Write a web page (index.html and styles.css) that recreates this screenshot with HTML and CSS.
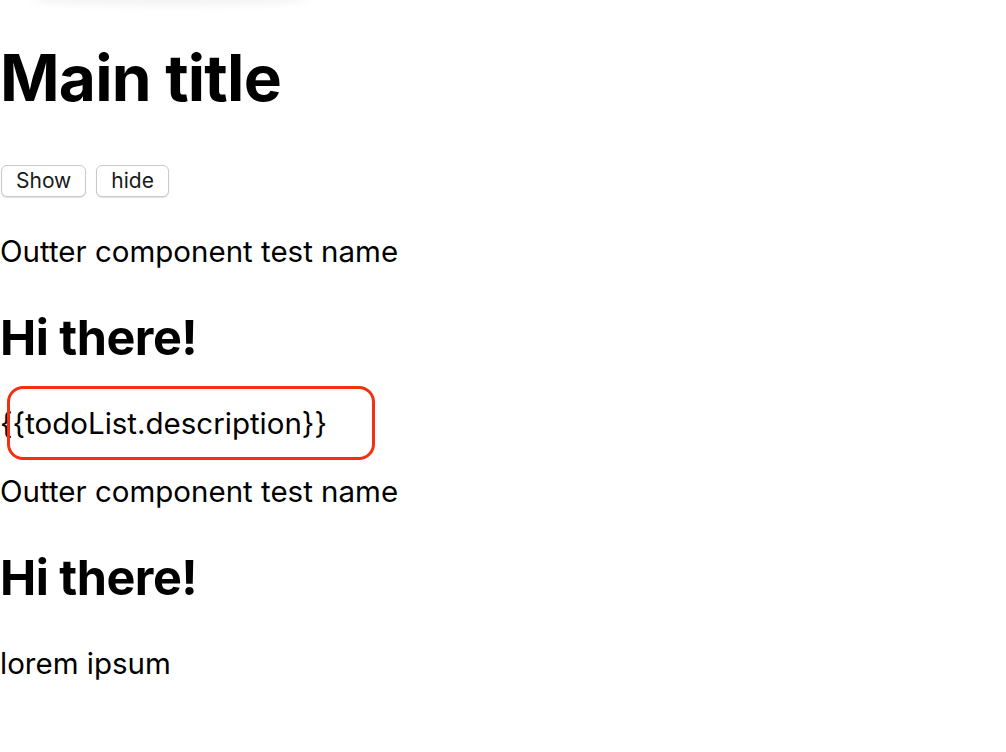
FILE: index.html
```html
<!DOCTYPE html>
<html lang="en">
<head>
<meta charset="utf-8">
<title>Main title</title>
<link rel="stylesheet" href="styles.css">
</head>
<body>
<div class="top-shade"></div>
<h1 class="main-title">Main title</h1>
<div class="controls">
  <button class="btn">Show</button>
  <button class="btn">hide</button>
</div>
<section class="outer">
  <p class="name">Outter component test name</p>
  <h2 class="greet">Hi there!</h2>
  <p class="desc">{{todoList.description}}<span class="highlight"></span></p>
</section>
<section class="outer">
  <p class="name">Outter component test name</p>
  <h2 class="greet">Hi there!</h2>
  <p class="desc">lorem ipsum</p>
</section>
</body>
</html>
```
FILE: styles.css
```css
html, body {
  margin: 0;
  padding: 0;
  background: #ffffff;
}
body {
  font-family: Inter, "Noto Sans", sans-serif;
  font-size: 29.5px;
  color: #000;
  position: relative;
}
.top-shade {
  position: absolute;
  left: 30px;
  top: -6px;
  width: 280px;
  height: 12px;
  border-radius: 50%;
  background: #f4f4f4;
  filter: blur(3px);
}
.main-title {
  font-size: 64px;
  font-weight: 700;
  margin: 40px 0 0;
  line-height: 75px;
  letter-spacing: -0.8px;
}
.controls {
  display: flex;
  gap: 10px;
  margin: 50px 0 0 1px;
  padding-bottom: 5px;
}
.btn {
  font-family: Inter, "Noto Sans", sans-serif;
  font-size: 21px;
  color: #1a1a1a;
  background: #fff;
  border: 1px solid #c9c9c9;
  border-radius: 6px;
  box-shadow: 0 1px 1px rgba(0,0,0,0.12);
  height: 32px;
  padding: 0 14px;
  line-height: 30px;
}
.outer p {
  margin: 0;
  line-height: 37px;
}
.name {
  margin-top: 31px !important;
}
.greet {
  font-size: 48.5px;
  font-weight: 700;
  line-height: 56px;
  margin: 40px 0 39px;
  letter-spacing: -0.5px;
}
.desc {
  position: relative;
}
.highlight {
  position: absolute;
  left: 7px;
  top: -19px;
  width: 368px;
  height: 74px;
  box-sizing: border-box;
  border: 3px solid #f4300e;
  border-radius: 16px;
}
```
